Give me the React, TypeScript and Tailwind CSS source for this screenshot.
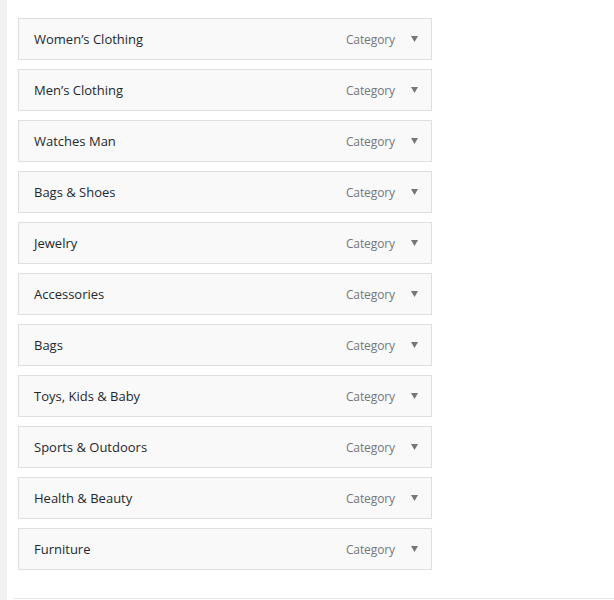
const items = [
  "Women’s Clothing",
  "Men’s Clothing",
  "Watches Man",
  "Bags & Shoes",
  "Jewelry",
  "Accessories",
  "Bags",
  "Toys, Kids & Baby",
  "Sports & Outdoors",
  "Health & Beauty",
  "Furniture",
];

function MenuItem({ title }: { title: string }) {
  return (
    <div className="flex h-[42px] w-[414px] items-center border border-[#dfdfdf] bg-[#f9f9f9] pl-[15px] pr-[13px] pt-[2px]">
      <span className="flex-1 text-[13px] font-medium text-[#23282d]">{title}</span>
      <span className="text-[12px] tracking-[-0.1px] text-[#72777c]">Category</span>
      <svg width="7" height="6" viewBox="0 0 7 6" className="mb-[3px] ml-[16px]">
        <path d="M0 0 L7 0 L3.5 6 Z" fill="#72777c" />
      </svg>
    </div>
  );
}

export default function App() {
  return (
    <div className="flex h-[600px] w-[614px] overflow-hidden bg-white font-['Open_Sans',_'Noto_Sans',_sans-serif]">
      <div className="w-[7px] shrink-0 bg-[#f1f1f1]" />
      <div className="flex flex-1 flex-col">
        <div className="flex flex-col gap-[9px] pl-[11px] pt-[18px]">
          {items.map((t) => (
            <MenuItem key={t} title={t} />
          ))}
        </div>
        <div className="ml-[7px] mt-[28px] border-t border-[#e5e5e5]" />
      </div>
    </div>
  );
}
